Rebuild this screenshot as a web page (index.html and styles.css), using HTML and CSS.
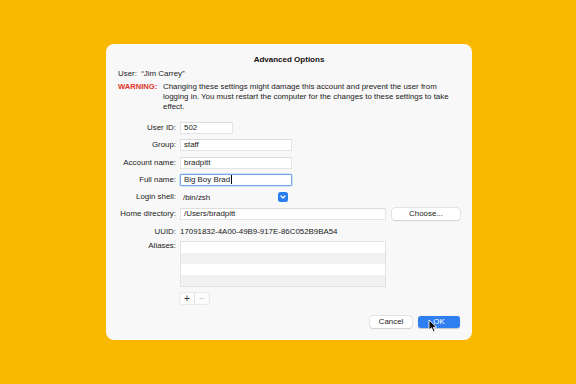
FILE: index.html
```html
<!DOCTYPE html>
<html>
<head>
<meta charset="utf-8">
<link rel="stylesheet" href="styles.css">
</head>
<body>
<div class="dialog">
  <div class="title">Advanced Options</div>
  <div class="user">User:&nbsp; “Jim Carrey”</div>
  <div class="warning">
    <span class="warn-label">WARNING:</span>
    <span class="warn-text">Changing these settings might damage this account and prevent the user from logging in. You must restart the computer for the changes to these settings to take effect.</span>
  </div>
  <div class="form">
    <div class="label">User ID:</div>
    <div class="cell"><div class="field w-short">502</div></div>

    <div class="label">Group:</div>
    <div class="cell"><div class="field w-mid">staff</div></div>

    <div class="label">Account name:</div>
    <div class="cell"><div class="field w-mid">bradpitt</div></div>

    <div class="label">Full name:</div>
    <div class="cell"><div class="field w-mid focused">Big Boy Brad<span class="caret"></span></div></div>

    <div class="label">Login shell:</div>
    <div class="cell"><div class="popup w-mid"><span>/bin/zsh</span><span class="chev"><svg width="8" height="8" viewBox="0 0 8 8"><path d="M2 3 L4 5 L6 3" fill="none" stroke="#fff" stroke-width="1.3" stroke-linecap="round" stroke-linejoin="round"/></svg></span></div></div>

    <div class="label">Home directory:</div>
    <div class="cell home"><div class="field w-long">/Users/bradpitt</div><div class="btn choose">Choose...</div></div>

    <div class="label">UUID:</div>
    <div class="cell"><div class="plain">17091832-4A00-49B9-917E-86C052B9BA54</div></div>
  </div>
  <div class="aliases">
    <div class="label top">Aliases:</div>
    <div class="col">
      <div class="table">
        <div class="trow"></div>
        <div class="trow alt"></div>
        <div class="trow"></div>
        <div class="trow alt"></div>
      </div>
      <div class="pm"><span class="pmb">+</span><span class="pmb dim">−</span></div>
    </div>
  </div>
  <div class="footer">
    <div class="btn cancel">Cancel</div>
    <div class="btn ok">OK</div>
    <svg class="cursor" width="10" height="14" viewBox="0 0 10 14"><path d="M1 1 L1 11 L3.5 8.8 L5.3 12.8 L7 12 L5.3 8.2 L8.6 8.2 Z" fill="#000" stroke="#fff" stroke-width="0.9" stroke-linejoin="round"/></svg>
  </div>
</div>
</body>
</html>
```
FILE: styles.css
```css
html, body { margin: 0; padding: 0; }
body {
  width: 576px;
  height: 384px;
  background: #fbb800;
  font-family: "Liberation Sans", Arial, sans-serif;
  font-size: 7.9px;
  color: #222;
  display: flex;
  align-items: flex-start;
  justify-content: center;
}
.dialog {
  margin-top: 44px;
  margin-left: 2px;
  width: 366px;
  height: 296px;
  box-sizing: border-box;
  background: #f8f8f8;
  border-radius: 8px;
  padding: 11px 12px 0 12px;
  display: flex;
  flex-direction: column;
  position: relative;
}
.title {
  text-align: center;
  font-weight: bold;
  font-size: 8px;
  line-height: 10px;
  color: #111;
}
.user {
  margin-top: 4px;
  line-height: 10px;
}
.warning {
  margin-top: 3px;
  display: flex;
  line-height: 10px;
}
.warn-label {
  color: #e0342a;
  font-weight: bold;
  font-size: 7.6px;
  width: 45px;
  flex: none;
}
.warn-text { flex: 1; padding-right: 4px; }
.form {
  margin-top: 10px;
  display: grid;
  grid-template-columns: 58px 1fr;
  column-gap: 4px;
  row-gap: 5.3px;
  grid-auto-rows: 12px;
}
.label {
  text-align: right;
  line-height: 12px;
  white-space: nowrap;
}
.cell { display: flex; align-items: center; gap: 6px; }
.aliases {
  margin-top: 3px;
  display: grid;
  grid-template-columns: 58px 1fr;
  column-gap: 4px;
}
.label.top { line-height: 10px; padding-top: 0; }
.col { display: flex; flex-direction: column; align-items: flex-start; gap: 5px; }
.field {
  height: 12px;
  box-sizing: border-box;
  background: #fff;
  border: 1px solid #e4e4e4;
  border-top-color: #dcdcdc;
  padding: 0 3px;
  line-height: 10px;
  white-space: nowrap;
  display: flex;
  align-items: center;
}
.w-short { width: 53px; }
.w-mid { width: 112px; }
.w-long { width: 206px; }
.field.focused {
  border: 1.5px solid #7aa7e8;
  border-radius: 1px;
  box-shadow: 0 0 0 0.5px #a9c7f2;
}
.caret {
  display: inline-block;
  width: 1px;
  height: 9px;
  background: #000;
  margin-left: 0.5px;
}
.popup {
  height: 12px;
  box-sizing: border-box;
  padding: 0 2px 0 3px;
  display: flex;
  align-items: center;
  justify-content: space-between;
}
.chev {
  width: 10px;
  height: 10px;
  border-radius: 2.5px;
  background: #2a7ef0;
  display: flex;
  align-items: center;
  justify-content: center;
  margin-right: 2px;
}
.chev svg { display: block; }
.btn {
  height: 12px;
  box-sizing: border-box;
  background: #fff;
  border-radius: 3px;
  box-shadow: 0 0 0 0.5px #d2d2d2, 0 0.5px 1px rgba(0,0,0,0.15);
  display: flex;
  align-items: center;
  justify-content: center;
  line-height: 12px;
  color: #222;
}
.choose { width: 68px; }
.plain { line-height: 12px; }
.table {
  width: 206px;
  box-sizing: border-box;
  border: 1px solid #e2e2e2;
  background: #fff;
  display: flex;
  flex-direction: column;
}
.trow { height: 11px; }
.trow.alt { background: #f1f1f1; }
.pm {
  display: flex;
  margin-top: 1px;
  border-radius: 2px;
  box-shadow: 0 0 0 0.5px #dcdcdc;
  background: #fcfcfc;
}
.pmb {
  width: 14px;
  height: 11px;
  display: flex;
  align-items: center;
  justify-content: center;
  font-size: 10px;
  color: #333;
  border-right: 0.5px solid #e2e2e2;
}
.pmb.dim { color: #c8c8c8; border-right: none; }
.footer {
  margin-top: auto;
  margin-bottom: 12px;
  display: flex;
  justify-content: flex-end;
  gap: 6px;
  position: relative;
}
.cancel { width: 42px; }
.ok {
  width: 42px;
  background: #2f7ff0;
  color: #fff;
  box-shadow: 0 0.5px 1px rgba(0,0,0,0.2);
}
.cursor {
  position: absolute;
  right: 22px;
  top: 3px;
}
```
